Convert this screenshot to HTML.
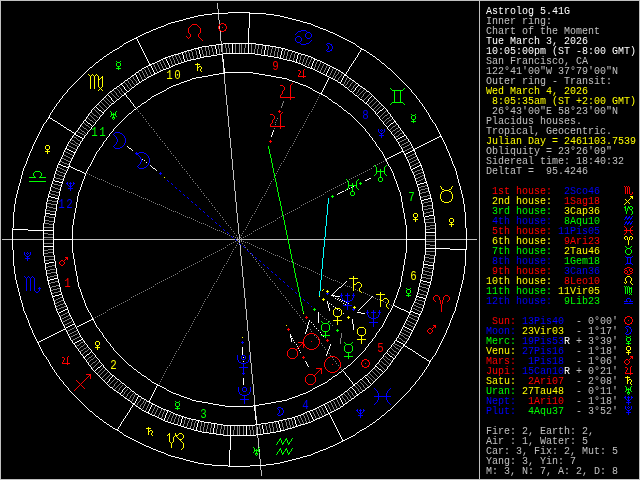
<!DOCTYPE html>
<html lang="en"><head><meta charset="utf-8"><title>Astrolog 5.41G - Chart of the Moment / Transit</title>
<style>
html,body{margin:0;padding:0;background:#000}
body{position:relative;width:640px;height:480px;overflow:hidden}
#chart{position:absolute;left:0;top:0;display:block;will-change:transform}
#chart path{fill:none;stroke-width:1}
#house-numbers text{font-family:"Liberation Mono",monospace;font-size:13.5px;text-anchor:middle;stroke:none;letter-spacing:1.9px}
#sidebar{position:absolute;left:485.5px;top:7px;margin:0;white-space:pre;
 font-family:"Liberation Mono",monospace;font-size:10px;line-height:10px;color:#c0c0c0;will-change:transform;}
.w{color:#fff}.y{color:#ff0}.r{color:#f00}.g{color:#0f0}.b{color:#00f}
</style></head><body>
<svg id="chart" width="640" height="480" viewBox="0 0 640 480" shape-rendering="crispEdges">
<g id="frame" fill="none" stroke="#c0c0c0" stroke-width="1">
<rect x=".5" y=".5" width="639" height="479"/>
<line x1="479.5" y1="0" x2="479.5" y2="480"/>
</g>
<g id="axes">
<path transform="translate(0 .5)" stroke="#c0c0c0" d="M2 239h475"/>
<path transform="translate(.5 0)" stroke="#c0c0c0" d="M217 3v6M218 9v11M219 20v10M220 30v11M221 41v11M222 52v10M223 62v11M224 73v11M225 84v11M226 95v10M227 105v11M228 116v11M229 127v11M230 138v10M231 148v11M232 159v11M233 170v10M234 180v11M235 191v11M236 202v11M237 213v10M238 223v11M239 234v5M239 240v5M240 245v11M241 256v10M242 266v11M243 277v11M244 288v10M245 298v11M246 309v11M247 320v11M248 331v10M249 341v11M250 352v11M251 363v11M252 374v10M253 384v11M254 395v11M255 406v10M256 416v11M257 427v11M258 438v11M259 449v10M260 459v11M261 470v6"/>
</g>
<g id="degree-ticks">
<path transform="translate(0 .5)" stroke="#ffffff" d="M165 58h1M150 65h1M330 66h1M135 74h1M344 75h1M139 81h1M340 82h1M121 84h1M122 85h1M358 85h1M123 86h1M357 86h1M356 87h1M125 89h1M126 90h1M354 90h1M353 91h1M108 95h1M109 96h1M371 96h1M110 97h1M370 97h1M369 98h1M112 100h1M113 101h1M367 101h1M366 102h1M96 107h1M97 108h1M383 108h1M98 109h1M382 109h1M99 110h2M380 110h2M101 111h1M379 111h1M102 112h1M378 112h1M377 113h1M85 120h1M86 121h1M394 121h1M87 122h1M393 122h1M88 123h2M391 123h2M90 124h1M390 124h1M91 125h1M389 125h1M388 126h1M75 134h1M76 135h2M404 135h1M78 136h2M402 136h2M80 137h2M400 137h2M82 138h1M398 138h2M397 139h1M66 148h1M67 149h2M69 150h2M412 150h2M71 151h2M410 151h2M73 152h2M408 152h2M406 153h2M405 154h1M59 164h2M61 165h2M419 165h2M63 166h3M417 166h2M66 167h2M415 167h2M413 168h2M412 169h1M53 180h2M55 181h4M59 182h3M424 182h2M420 183h4M418 184h2M49 196h2M51 197h4M55 198h3M428 198h3M424 199h4M422 200h2M46 213h4M50 214h5M429 215h5M425 216h4M44 230h9M426 232h9M44 246h9M426 248h9M49 262h5M45 263h4M424 264h4M428 265h5M54 278h3M50 279h4M48 280h2M421 280h2M423 281h4M427 282h3M59 294h2M55 295h4M53 296h2M417 296h2M419 297h4M423 298h3M65 309h2M63 310h2M61 311h2M411 311h2M59 312h2M413 312h2M58 313h1M415 313h3M418 314h2M72 324h2M70 325h2M68 326h2M404 326h1M66 327h2M405 327h2M65 328h1M407 328h2M409 329h2M411 330h2M81 339h1M79 340h2M396 340h1M77 341h2M397 341h2M75 342h2M399 342h2M74 343h1M401 343h2M403 344h1M90 352h1M89 353h1M387 353h1M87 354h2M388 354h1M86 355h1M389 355h1M85 356h1M390 356h2M84 357h1M392 357h1M393 358h1M101 365h1M100 366h1M376 366h1M98 367h2M377 367h1M97 368h1M378 368h1M96 369h1M379 369h2M95 370h1M381 370h1M382 371h1M112 376h1M111 377h1M365 377h1M110 378h1M366 378h1M367 379h1M108 381h1M107 382h1M369 382h1M370 383h1M125 387h1M124 388h1M352 388h1M123 389h1M353 389h1M354 390h1M121 392h1M120 393h1M356 393h1M357 394h1M138 396h1M339 397h1M134 403h1M152 404h1M343 404h1M324 405h1M309 412h1"/>
<path transform="translate(.5 0)" stroke="#ffffff" d="M109 379v2M111 98v2M122 390v2M124 87v2M135 401v2M136 75v2M136 399v2M137 77v2M137 397v2M138 79v2M148 411v2M149 409v2M150 407v2M151 66v2M151 405v2M152 68v2M153 70v2M154 72v2M164 418v2M165 415v3M166 59v2M166 413v2M167 61v2M167 411v2M168 63v2M169 65v2M180 423v3M181 419v4M182 53v2M182 417v2M183 55v4M184 59v2M196 427v3M197 423v4M198 48v2M198 421v2M199 50v4M200 54v3M213 428v5M214 424v4M215 45v4M216 49v5M230 426v9M232 44v9M246 426v9M248 44v9M262 425v4M263 429v5M264 50v5M265 46v4M278 422v2M279 424v4M280 55v3M280 428v3M281 51v4M282 49v2M294 418v2M295 420v4M296 59v3M296 424v2M297 55v4M298 53v2M310 413v2M311 66v2M311 415v2M312 63v3M312 417v2M313 61v2M313 419v2M314 59v2M325 406v2M326 73v2M326 408v2M327 71v2M327 410v2M328 69v2M328 412v2M329 67v2M340 398v2M341 80v2M341 400v2M342 78v2M342 402v2M343 76v2M355 88v2M355 391v2M368 99v2M368 380v2"/>
<path transform="translate(0 .5)" stroke="#808080" d="M162 60h1M159 61h1M156 62h1M324 63h1M153 64h1M327 65h1M147 67h1M166 67h1M333 68h1M144 69h1M141 70h1M336 70h1M157 71h1M339 71h1M138 72h1M323 72h1M342 73h1M151 74h1M337 74h1M329 75h1M336 75h1M132 76h1M148 76h1M340 76h1M145 77h1M332 77h1M339 77h1M347 77h1M129 78h1M334 78h1M130 79h1M134 79h1M142 79h1M350 79h1M127 80h1M131 80h1M135 80h1M337 80h1M349 80h1M348 81h1M353 81h1M124 82h1M352 82h1M125 83h1M129 83h1M133 83h1M137 83h1M351 83h1M356 83h1M126 84h1M134 84h1M343 84h1M346 84h1M355 84h1M345 85h1M354 85h1M118 86h1M131 86h1M349 86h1M119 87h1M128 87h1M348 87h1M361 87h1M116 88h1M120 88h1M129 88h1M352 88h1M360 88h1M117 89h1M351 89h1M359 89h1M364 89h1M113 90h1M118 90h1M363 90h1M114 91h1M122 91h1M362 91h1M366 91h1M110 92h1M115 92h1M123 92h1M357 92h1M361 92h1M365 92h1M111 93h1M120 93h1M356 93h1M360 93h1M364 93h1M112 94h1M121 94h1M359 94h1M369 94h1M113 95h1M117 95h1M358 95h1M368 95h1M114 96h1M118 96h1M362 96h1M367 96h1M105 97h1M115 97h1M361 97h1M366 97h1M106 98h1M116 98h1M365 98h1M374 98h1M103 99h1M107 99h1M364 99h1M373 99h1M104 100h1M108 100h1M363 100h1M372 100h1M105 101h1M109 101h1M371 101h1M376 101h1M101 102h1M106 102h1M110 102h1M370 102h1M375 102h1M102 103h1M107 103h1M111 103h1M369 103h1M374 103h1M379 103h1M98 104h1M103 104h1M108 104h1M368 104h1M373 104h1M378 104h1M99 105h1M104 105h1M109 105h1M372 105h1M377 105h1M381 105h1M100 106h1M105 106h1M371 106h1M376 106h1M380 106h1M101 107h1M106 107h1M375 107h1M379 107h1M102 108h1M374 108h1M378 108h1M94 109h1M103 109h1M373 109h1M377 109h1M95 110h1M104 110h1M376 110h1M386 110h1M96 111h1M375 111h1M385 111h1M91 112h1M97 112h1M384 112h1M92 113h1M98 113h1M383 113h1M388 113h1M89 114h1M93 114h1M99 114h1M382 114h1M387 114h1M90 115h1M94 115h2M100 115h1M381 115h1M385 115h2M91 116h1M96 116h1M380 116h1M384 116h1M390 116h1M87 117h1M92 117h1M97 117h1M383 117h1M389 117h1M88 118h1M93 118h1M382 118h1M387 118h2M392 118h1M89 119h1M94 119h1M386 119h1M391 119h1M90 120h2M95 120h1M385 120h1M389 120h2M92 121h1M384 121h1M388 121h1M83 122h1M93 122h1M387 122h1M84 123h1M386 123h1M85 124h1M396 124h1M81 125h1M86 125h2M395 125h1M82 126h1M88 126h1M393 126h2M83 127h1M89 127h1M392 127h1M398 127h1M79 128h1M84 128h2M391 128h1M396 128h2M80 129h1M86 129h1M390 129h1M395 129h1M400 129h1M81 130h1M87 130h1M393 130h2M399 130h1M77 131h1M82 131h2M392 131h1M397 131h2M78 132h2M84 132h1M396 132h1M402 132h1M80 133h2M85 133h1M395 133h1M400 133h2M82 134h2M394 134h1M399 134h1M84 135h1M398 135h1M73 136h1M396 136h2M74 137h2M395 137h1M76 138h1M406 138h1M71 139h1M77 139h1M404 139h2M72 140h2M78 140h2M402 140h2M74 141h1M80 141h1M400 141h2M408 141h1M70 142h1M75 142h1M399 142h1M406 142h2M71 143h2M76 143h2M404 143h2M73 144h2M78 144h1M402 144h2M409 144h1M68 145h1M75 145h2M401 145h1M407 145h2M69 146h2M77 146h1M405 146h2M71 147h2M403 147h2M411 147h1M73 148h2M402 148h1M409 148h2M75 149h1M407 149h2M405 150h2M65 151h1M404 151h1M66 152h2M68 153h2M414 153h1M63 154h1M70 154h2M412 154h2M64 155h2M72 155h1M410 155h2M66 156h2M408 156h2M415 156h2M68 157h2M407 157h1M413 157h2M62 158h2M70 158h2M411 158h2M64 159h2M409 159h2M416 159h2M66 160h2M408 160h1M414 160h2M60 161h2M68 161h2M412 161h2M62 162h2M410 162h2M418 162h1M64 163h3M409 163h1M416 163h2M67 164h2M414 164h2M412 165h2M411 166h1M58 167h2M60 168h2M62 169h2M420 169h2M56 170h2M64 170h2M417 170h3M58 171h2M415 171h2M60 172h3M413 172h2M421 172h2M55 173h2M63 173h2M418 173h3M57 174h2M416 174h2M59 175h3M414 175h2M422 175h2M62 176h2M420 176h2M54 177h2M418 177h2M56 178h4M416 178h2M423 178h2M60 179h3M421 179h2M419 180h2M417 181h2M52 183h2M54 184h4M58 185h3M425 185h2M51 186h2M421 186h4M53 187h2M419 187h2M55 188h3M425 188h3M58 189h2M421 189h4M50 190h2M419 190h2M52 191h4M426 191h3M56 192h3M422 192h4M49 193h2M420 193h2M51 194h4M55 195h3M427 195h3M423 196h4M421 197h2M48 200h4M52 201h5M428 201h3M424 202h4M47 203h4M422 203h2M51 204h5M427 205h5M47 206h2M423 206h4M49 207h4M53 208h3M428 208h5M424 209h4M46 210h4M50 211h5M430 211h3M426 212h4M424 213h2M45 216h4M49 217h5M429 218h5M425 219h4M45 220h4M49 221h5M425 222h9M44 223h5M49 224h5M430 225h5M426 226h4M44 227h9M430 228h5M426 229h4M44 233h4M48 234h5M426 235h9M44 237h9M44 239h9M426 239h9M426 241h9M44 243h9M426 244h4M430 245h5M48 249h5M44 250h4M426 251h9M48 252h5M44 253h4M425 254h5M430 255h5M45 256h9M425 257h4M429 258h5M49 259h5M45 260h4M425 261h4M429 262h5M52 265h3M48 266h4M46 267h2M424 267h4M428 268h5M50 269h5M46 270h4M423 270h2M425 271h4M51 272h5M429 272h3M47 273h4M423 274h4M54 275h3M427 275h5M50 276h4M48 277h2M422 277h4M426 278h5M55 281h3M51 282h4M49 283h2M421 283h2M423 284h4M56 285h3M427 285h3M52 286h4M420 286h2M50 287h2M422 287h4M57 288h3M426 288h3M53 289h4M419 289h2M51 290h2M421 290h2M58 291h2M423 291h3M54 292h4M426 292h2M52 293h2M418 293h2M420 294h4M424 295h3M60 297h2M58 298h2M56 299h2M416 299h2M54 300h2M61 300h2M418 300h4M59 301h2M422 301h3M57 302h2M415 302h2M55 303h2M63 303h2M417 303h2M60 304h3M419 304h3M58 305h2M414 305h2M422 305h2M56 306h2M64 306h2M416 306h2M61 307h3M418 307h3M59 308h2M413 308h2M421 308h2M57 309h2M415 309h2M417 310h2M419 311h2M67 312h1M65 313h2M63 314h2M410 314h2M61 315h2M68 315h2M412 315h2M60 316h1M66 316h2M414 316h3M64 317h2M409 317h2M417 317h2M62 318h2M69 318h2M411 318h2M61 319h1M67 319h2M413 319h2M65 320h2M407 320h1M415 320h2M63 321h2M71 321h1M408 321h2M62 322h1M69 322h2M410 322h2M67 323h2M406 323h1M412 323h2M65 324h2M407 324h2M414 324h2M64 325h1M409 325h2M411 326h2M74 327h1M413 327h1M72 328h2M70 329h2M403 329h1M68 330h2M76 330h1M404 330h2M67 331h1M74 331h2M406 331h2M72 332h2M401 332h1M408 332h2M70 333h2M77 333h1M402 333h2M410 333h1M69 334h1M75 334h2M400 334h1M404 334h2M73 335h2M401 335h2M406 335h2M71 336h2M79 336h1M403 336h1M408 336h1M70 337h1M77 337h2M398 337h1M404 337h1M75 338h2M399 338h2M405 338h2M73 339h2M401 339h1M407 339h1M72 340h1M402 340h1M83 341h1M403 341h2M81 342h2M405 342h1M80 343h1M394 343h1M79 344h1M84 344h1M395 344h2M77 345h2M83 345h1M393 345h1M397 345h2M76 346h1M81 346h2M394 346h1M399 346h2M80 347h1M86 347h1M395 347h1M401 347h1M79 348h1M84 348h2M391 348h1M396 348h2M78 349h1M83 349h1M88 349h1M392 349h1M398 349h1M81 350h2M87 350h1M393 350h1M399 350h1M80 351h1M85 351h2M389 351h1M394 351h2M84 352h1M390 352h1M396 352h1M83 353h1M391 353h1M397 353h1M82 354h1M392 354h2M92 355h1M394 355h1M91 356h1M385 356h1M395 356h1M89 357h2M94 357h1M386 357h1M88 358h1M93 358h1M383 358h1M387 358h1M87 359h1M91 359h2M384 359h1M388 359h2M86 360h1M90 360h1M96 360h1M385 360h1M390 360h1M89 361h1M95 361h1M381 361h1M386 361h1M391 361h1M88 362h1M93 362h2M98 362h1M382 362h1M387 362h1M92 363h1M97 363h1M378 363h1M383 363h1M388 363h1M91 364h1M96 364h1M379 364h1M384 364h2M389 364h1M90 365h1M95 365h1M380 365h1M386 365h1M94 366h1M381 366h1M387 366h1M93 367h1M103 367h1M382 367h1M92 368h1M102 368h1M374 368h1M383 368h1M101 369h1M105 369h1M375 369h1M384 369h1M100 370h1M104 370h1M376 370h1M99 371h1M103 371h1M372 371h1M377 371h1M98 372h1M102 372h1M107 372h1M373 372h1M378 372h1M97 373h1M101 373h1M106 373h1M369 373h1M374 373h1M379 373h1M100 374h1M105 374h1M110 374h1M370 374h1M375 374h1M380 374h1M99 375h1M104 375h1M109 375h1M367 375h1M371 375h1M376 375h1M103 376h1M108 376h1M368 376h1M372 376h1M377 376h1M102 377h1M107 377h1M369 377h1M373 377h1M106 378h1M115 378h1M370 378h1M374 378h1M105 379h1M114 379h1M371 379h1M375 379h1M104 380h1M113 380h1M362 380h1M372 380h1M112 381h1M117 381h1M363 381h1M373 381h1M111 382h1M116 382h1M360 382h1M364 382h1M110 383h1M115 383h1M120 383h1M361 383h1M365 383h1M109 384h1M119 384h1M357 384h1M362 384h1M366 384h1M118 385h1M122 385h1M358 385h1M367 385h1M113 386h1M117 386h1M121 386h1M355 386h1M359 386h1M368 386h1M112 387h1M116 387h1M120 387h1M356 387h1M364 387h1M115 388h1M357 388h1M365 388h1M114 389h1M127 389h1M361 389h1M118 390h1M126 390h1M349 390h1M362 390h1M117 391h1M125 391h1M130 391h1M350 391h1M359 391h1M129 392h1M347 392h1M351 392h1M360 392h1M128 393h1M133 393h1M123 394h1M132 394h1M135 394h1M344 394h1M122 395h1M131 395h1M341 395h1M345 395h1M349 395h1M353 395h1M126 396h1M346 396h1M354 396h1M125 397h1M129 398h1M141 398h1M343 398h1M351 398h1M128 399h1M336 399h1M344 399h1M348 399h1M144 400h1M349 400h1M131 401h1M139 401h1M146 401h1M333 401h1M138 402h1M330 402h1M346 402h1M142 403h1M149 403h1M141 404h1M327 404h1M136 405h1M155 406h1M340 406h1M139 407h1M158 407h1M321 407h1M142 408h1M318 408h1M337 408h1M315 409h1M334 409h1M145 410h1M312 411h1M331 411h1M151 413h1M325 414h1M316 418h1"/>
<path transform="translate(.5 0)" stroke="#808080" d="M114 384v2M116 93v2M119 91v2M119 388v2M121 89v2M124 392v2M127 85v2M127 394v2M128 81v2M130 84v2M130 396v2M132 81v2M132 399v2M133 77v2M133 397v2M134 395v2M136 81v2M137 403v2M139 73v2M140 75v2M140 399v2M140 405v2M141 77v2M142 71v2M143 73v2M143 401v2M143 406v2M144 75v2M144 404v2M145 70v2M145 402v2M146 72v2M146 408v2M147 74v2M147 406v2M148 68v2M148 404v2M149 70v2M150 72v2M152 411v2M153 409v2M154 65v2M154 407v2M154 414v2M155 67v2M155 412v2M156 69v2M156 410v2M157 63v2M157 408v2M158 65v2M158 415v2M159 67v2M159 413v2M160 62v2M160 69v2M160 411v2M161 64v2M161 409v2M161 417v2M162 66v2M162 414v3M163 61v2M163 68v2M163 412v2M164 63v2M164 410v2M165 65v2M167 419v2M168 417v2M169 57v2M169 415v2M170 59v2M170 413v2M170 421v2M171 61v3M171 418v3M172 56v2M172 64v2M172 416v2M173 58v2M173 414v2M173 422v2M174 60v3M174 419v3M175 55v2M175 63v2M175 417v2M176 57v2M176 415v2M177 59v2M177 422v3M178 54v2M178 61v2M178 418v4M179 56v2M179 416v2M180 58v2M181 60v2M183 424v3M184 420v4M185 52v2M185 418v2M186 54v4M186 426v2M187 58v2M187 423v3M188 51v2M188 421v2M189 53v4M189 419v2M190 57v3M190 426v3M191 50v2M191 422v4M192 52v4M192 420v2M193 56v3M193 427v3M194 423v4M195 49v2M195 421v2M196 51v4M197 55v3M200 426v5M201 48v2M201 422v4M202 50v4M203 54v3M203 427v5M204 423v4M205 47v4M206 51v5M206 429v3M207 425v4M208 46v4M208 423v2M209 50v5M210 428v5M211 46v2M211 424v4M212 48v4M213 52v3M216 429v5M217 425v4M218 45v4M219 49v5M220 429v5M221 425v4M222 45v9M223 430v5M224 425v5M225 44v4M226 48v5M227 426v9M228 44v4M229 48v5M233 430v5M234 426v4M235 44v9M237 426v9M239 44v9M239 426v9M241 44v9M243 426v9M244 48v5M245 44v4M249 426v4M250 430v5M251 44v9M252 426v4M253 430v5M254 49v5M255 44v5M256 425v9M257 49v5M258 45v4M259 425v4M260 429v5M261 49v5M262 45v4M265 424v2M266 426v4M267 50v5M267 430v3M268 46v4M269 424v4M270 53v3M270 428v5M271 49v4M272 47v2M272 423v4M273 427v5M274 51v5M275 47v4M275 422v2M276 424v4M277 52v5M277 428v3M278 48v4M281 421v2M282 423v4M283 55v3M283 427v3M284 51v4M285 49v2M285 420v2M286 56v3M286 422v4M287 52v4M287 426v3M288 50v2M288 419v2M289 58v2M289 421v4M290 55v3M290 425v3M291 53v2M291 419v2M292 51v2M292 421v4M293 58v3M293 425v2M294 54v4M295 52v2M297 417v2M298 419v2M299 60v3M299 421v2M300 56v4M300 416v2M300 423v2M301 54v2M301 418v2M302 62v2M302 420v2M303 59v3M303 414v2M303 422v2M304 57v2M304 416v2M305 55v2M305 63v2M305 418v3M306 60v3M306 413v2M306 421v2M307 58v2M307 415v2M308 56v2M308 64v2M308 417v3M309 62v2M309 420v2M310 60v2M311 58v2M313 412v2M314 67v2M314 414v2M315 64v3M315 416v2M316 62v2M316 410v2M317 60v2M317 68v2M317 412v2M318 66v2M318 414v2M319 64v2M319 409v2M319 416v2M320 62v2M320 70v2M320 411v2M321 68v2M321 413v2M322 66v2M322 408v2M322 415v2M323 64v2M323 410v2M324 70v2M324 412v2M325 68v2M326 66v2M328 405v2M329 407v2M330 73v2M330 409v2M331 71v2M331 403v2M332 69v2M332 405v2M333 75v2M333 407v2M334 73v2M334 402v2M335 71v2M335 76v2M335 404v2M336 406v2M337 400v2M338 72v2M338 78v2M338 402v2M339 404v2M341 74v2M342 396v2M344 82v2M345 80v2M345 400v2M346 78v2M347 82v2M347 397v2M348 393v2M350 84v2M350 396v2M352 393v2M353 86v2M358 90v2M358 389v2M360 387v2M363 94v2M363 385v2"/>
</g>
<g id="rings">
<path transform="translate(0 .5)" stroke="#ffffff" d="M228 12h22M212 13h16M250 13h16M204 14h8M266 14h8M198 15h6M274 15h6M194 16h4M280 16h4M190 17h4M284 17h4M186 18h4M288 18h4M183 19h3M292 19h4M179 20h4M296 20h4M175 21h4M300 21h3M171 22h4M303 22h4M168 23h3M307 23h4M166 24h2M311 24h2M164 25h2M313 25h2M161 26h3M315 26h3M158 27h3M318 27h2M156 28h2M320 28h3M153 29h3M323 29h3M151 30h2M326 30h2M149 31h2M328 31h2M146 32h3M330 32h3M144 33h2M333 33h2M142 34h2M335 34h2M140 35h2M337 35h2M138 36h2M339 36h2M136 37h2M341 37h2M134 38h2M343 38h2M132 39h2M345 39h2M130 40h2M347 40h2M128 41h2M349 41h2M126 42h2M351 42h2M124 43h2M223 43h33M353 43h2M123 44h1M216 44h7M256 44h7M355 44h1M122 45h1M209 45h7M263 45h7M356 45h1M120 46h2M202 46h7M270 46h6M357 46h2M119 47h1M198 47h4M276 47h5M359 47h1M117 48h2M194 48h4M281 48h4M360 48h2M115 49h2M191 49h3M285 49h3M362 49h2M113 50h2M187 50h4M288 50h4M364 50h2M112 51h1M184 51h3M292 51h3M366 51h1M110 52h2M181 52h3M295 52h3M367 52h2M109 53h1M178 53h3M223 53h32M298 53h3M369 53h1M107 54h2M174 54h4M217 54h6M255 54h6M301 54h4M370 54h2M106 55h1M171 55h3M211 55h6M261 55h7M305 55h3M372 55h1M104 56h2M168 56h3M204 56h7M268 56h6M308 56h3M373 56h2M103 57h1M165 57h3M200 57h4M274 57h5M311 57h2M375 57h1M102 58h1M163 58h2M196 58h4M279 58h4M313 58h2M376 58h1M100 59h2M161 59h2M191 59h5M283 59h4M315 59h2M377 59h2M99 60h1M159 60h2M187 60h4M287 60h5M317 60h3M379 60h1M98 61h1M157 61h2M184 61h3M292 61h3M320 61h2M380 61h1M96 62h2M155 62h2M181 62h3M295 62h3M322 62h2M381 62h1M95 63h1M152 63h3M178 63h3M298 63h3M324 63h2M382 63h2M94 64h1M150 64h2M175 64h3M301 64h2M326 64h2M384 64h1M93 65h1M148 65h2M173 65h2M303 65h2M328 65h2M385 65h1M92 66h1M146 66h2M171 66h2M305 66h2M330 66h2M386 66h1M90 67h2M144 67h2M169 67h2M307 67h3M332 67h2M387 67h1M89 68h1M142 68h2M166 68h3M310 68h3M334 68h2M388 68h2M88 69h1M141 69h1M163 69h3M313 69h2M336 69h2M390 69h1M87 70h1M139 70h2M161 70h2M315 70h2M338 70h2M391 70h1M86 71h1M138 71h1M159 71h2M317 71h2M340 71h1M392 71h1M85 72h1M136 72h2M157 72h2M225 72h28M319 72h2M341 72h2M393 72h1M84 73h1M135 73h1M155 73h2M219 73h6M253 73h6M321 73h2M343 73h1M394 73h1M83 74h1M134 74h1M153 74h2M213 74h6M259 74h6M323 74h2M344 74h1M395 74h1M82 75h1M132 75h2M151 75h2M208 75h5M265 75h6M325 75h2M345 75h2M396 75h1M81 76h1M131 76h1M149 76h2M202 76h6M271 76h5M327 76h2M347 76h1M397 76h1M80 77h1M130 77h1M147 77h2M196 77h6M276 77h6M329 77h2M348 77h1M398 77h1M79 78h1M128 78h2M146 78h1M192 78h4M282 78h5M331 78h2M349 78h2M399 78h1M78 79h1M127 79h1M144 79h2M190 79h2M287 79h2M333 79h2M351 79h1M400 79h1M77 80h1M125 80h2M142 80h2M187 80h3M289 80h3M335 80h2M352 80h2M401 80h1M76 81h1M124 81h1M141 81h1M184 81h3M292 81h3M337 81h1M354 81h1M402 81h1M75 82h1M123 82h1M139 82h2M181 82h3M295 82h3M338 82h2M355 82h1M403 82h1M74 83h1M121 83h2M138 83h1M179 83h2M298 83h2M340 83h1M356 83h2M404 83h1M73 84h1M120 84h1M136 84h2M176 84h3M300 84h3M341 84h2M358 84h1M405 84h1M72 85h1M119 85h1M135 85h1M173 85h3M303 85h3M343 85h1M359 85h1M406 85h1M71 86h1M117 86h2M134 86h1M171 86h2M306 86h2M344 86h1M360 86h2M407 86h1M70 87h1M116 87h1M132 87h2M169 87h2M308 87h2M345 87h2M362 87h1M408 87h1M69 88h1M114 88h2M131 88h1M167 88h2M310 88h2M347 88h1M363 88h2M409 88h1M68 89h1M113 89h1M130 89h1M166 89h1M312 89h1M348 89h1M365 89h1M410 89h1M112 90h1M129 90h1M164 90h2M313 90h2M349 90h1M366 90h1M110 91h2M127 91h2M162 91h2M315 91h2M350 91h2M367 91h2M66 92h1M109 92h1M126 92h1M160 92h2M317 92h2M352 92h1M369 92h1M412 92h1M65 93h1M108 93h1M125 93h1M158 93h2M319 93h2M353 93h1M370 93h1M413 93h1M64 94h1M107 94h1M124 94h1M156 94h2M321 94h2M354 94h1M371 94h1M414 94h1M63 95h1M106 95h1M122 95h2M154 95h2M323 95h2M355 95h2M372 95h1M415 95h1M105 96h1M121 96h1M152 96h2M325 96h2M357 96h1M373 96h1M104 97h1M120 97h1M151 97h1M327 97h1M358 97h1M374 97h1M61 98h1M103 98h1M119 98h1M150 98h1M328 98h1M359 98h1M375 98h1M417 98h1M60 99h1M102 99h1M117 99h2M148 99h2M329 99h2M360 99h2M376 99h1M418 99h1M101 100h1M116 100h1M147 100h1M331 100h1M362 100h1M377 100h1M100 101h1M115 101h1M146 101h1M332 101h1M363 101h1M378 101h1M58 102h1M99 102h1M114 102h1M144 102h2M333 102h2M364 102h1M379 102h1M420 102h1M57 103h1M98 103h1M112 103h2M142 103h2M335 103h2M365 103h2M380 103h1M421 103h1M97 104h1M111 104h1M141 104h1M337 104h1M367 104h1M381 104h1M96 105h1M110 105h1M140 105h1M338 105h1M368 105h1M382 105h1M55 106h1M95 106h1M109 106h1M138 106h2M339 106h2M369 106h1M383 106h1M423 106h1M94 107h1M108 107h1M137 107h1M341 107h1M370 107h1M384 107h1M93 108h1M107 108h1M136 108h1M342 108h1M371 108h1M385 108h1M53 109h1M92 109h1M106 109h1M134 109h2M343 109h1M372 109h1M386 109h1M425 109h1M105 110h1M133 110h1M344 110h2M373 110h1M104 111h1M132 111h1M346 111h1M374 111h1M51 112h1M90 112h1M131 112h1M347 112h1M388 112h1M427 112h1M89 113h1M129 113h2M348 113h2M389 113h1M102 114h1M128 114h1M350 114h1M376 114h1M101 115h1M127 115h1M351 115h1M377 115h1M87 116h1M100 116h1M126 116h1M352 116h1M378 116h1M391 116h1M125 117h1M353 117h1M124 118h1M354 118h1M47 119h1M85 119h1M98 119h1M123 119h1M355 119h1M380 119h1M393 119h1M431 119h1M84 120h1M97 120h1M122 120h1M356 120h1M381 120h1M394 120h1M96 121h1M121 121h1M357 121h1M382 121h1M45 122h1M120 122h1M358 122h1M433 122h1M44 123h1M82 123h1M119 123h1M359 123h1M396 123h1M434 123h1M81 124h1M94 124h1M118 124h1M360 124h1M384 124h1M397 124h1M93 125h1M117 125h1M361 125h1M385 125h1M92 126h1M116 126h1M362 126h1M386 126h1M79 127h1M115 127h1M363 127h1M399 127h1M114 128h1M364 128h1M90 129h1M388 129h1M77 130h1M89 130h1M389 130h1M401 130h1M76 131h1M88 131h1M112 131h1M366 131h1M390 131h1M402 131h1M111 132h1M367 132h1M110 133h1M368 133h1M74 134h1M86 134h1M392 134h1M404 134h1M73 135h1M85 135h1M393 135h1M405 135h1M108 136h1M370 136h1M107 137h1M371 137h1M71 138h1M83 138h1M395 138h1M407 138h1M105 140h1M373 140h1M69 141h1M81 141h1M104 141h1M374 141h1M397 141h1M409 141h1M78 146h1M101 146h1M377 146h1M400 146h1M100 147h1M378 147h1M98 150h1M380 150h1M97 151h1M381 151h1M89 166h1M389 166h1M89 312h1M389 312h1M97 327h1M381 327h1M98 328h1M380 328h1M100 331h1M378 331h1M101 332h1M377 332h1M81 337h1M104 337h1M374 337h1M397 337h1M105 338h1M373 338h1M71 340h1M83 340h1M395 340h1M407 340h1M107 341h1M371 341h1M108 342h1M370 342h1M73 343h1M85 343h1M109 343h1M369 343h1M393 343h1M405 343h1M74 344h1M86 344h1M392 344h1M404 344h1M111 346h1M367 346h1M76 347h1M88 347h1M112 347h1M366 347h1M390 347h1M402 347h1M77 348h1M89 348h1M389 348h1M401 348h1M90 349h1M388 349h1M114 350h1M364 350h1M79 351h1M115 351h1M363 351h1M399 351h1M92 352h1M116 352h1M362 352h1M386 352h1M93 353h1M117 353h1M361 353h1M385 353h1M81 354h1M94 354h1M118 354h1M360 354h1M384 354h1M397 354h1M44 355h1M82 355h1M119 355h1M359 355h1M396 355h1M434 355h1M45 356h1M120 356h1M358 356h1M433 356h1M96 357h1M121 357h1M357 357h1M382 357h1M84 358h1M97 358h1M122 358h1M356 358h1M381 358h1M394 358h1M47 359h1M85 359h1M98 359h1M123 359h1M355 359h1M380 359h1M393 359h1M431 359h1M124 360h1M354 360h1M125 361h1M353 361h1M87 362h1M100 362h1M126 362h1M352 362h1M378 362h1M391 362h1M101 363h1M127 363h1M351 363h1M377 363h1M102 364h1M128 364h1M350 364h1M376 364h1M89 365h1M129 365h2M348 365h2M389 365h1M51 366h1M90 366h1M131 366h1M347 366h1M388 366h1M427 366h1M104 367h1M132 367h1M346 367h1M374 367h1M105 368h1M133 368h1M344 368h2M373 368h1M53 369h1M92 369h1M106 369h1M134 369h2M343 369h1M372 369h1M386 369h1M425 369h1M93 370h1M107 370h1M136 370h1M342 370h1M371 370h1M385 370h1M94 371h1M108 371h1M137 371h1M341 371h1M370 371h1M384 371h1M55 372h1M95 372h1M109 372h1M138 372h2M339 372h2M369 372h1M383 372h1M423 372h1M96 373h1M110 373h1M140 373h1M338 373h1M368 373h1M382 373h1M97 374h1M111 374h1M141 374h1M337 374h1M367 374h1M381 374h1M57 375h1M98 375h1M112 375h2M142 375h2M335 375h2M365 375h2M380 375h1M421 375h1M58 376h1M99 376h1M114 376h1M144 376h2M333 376h2M364 376h1M379 376h1M420 376h1M100 377h1M115 377h1M146 377h1M332 377h1M363 377h1M378 377h1M101 378h1M116 378h1M147 378h1M331 378h1M362 378h1M377 378h1M60 379h1M102 379h1M117 379h2M148 379h2M329 379h2M360 379h2M376 379h1M418 379h1M61 380h1M103 380h1M119 380h1M150 380h1M328 380h1M359 380h1M375 380h1M417 380h1M62 381h1M104 381h1M120 381h1M151 381h1M327 381h1M358 381h1M374 381h1M416 381h1M105 382h1M121 382h1M152 382h2M325 382h2M357 382h1M373 382h1M106 383h1M122 383h2M154 383h2M323 383h2M355 383h2M372 383h1M64 384h1M107 384h1M124 384h1M156 384h2M321 384h2M354 384h1M371 384h1M414 384h1M65 385h1M108 385h1M125 385h1M158 385h2M319 385h2M353 385h1M370 385h1M413 385h1M66 386h1M109 386h1M126 386h1M160 386h2M317 386h2M352 386h1M369 386h1M412 386h1M67 387h1M110 387h2M127 387h2M162 387h2M315 387h2M350 387h2M367 387h2M411 387h1M112 388h1M129 388h1M164 388h2M313 388h2M349 388h1M366 388h1M113 389h1M130 389h1M166 389h1M312 389h1M348 389h1M365 389h1M69 390h1M114 390h2M131 390h1M167 390h2M310 390h2M347 390h1M363 390h2M409 390h1M70 391h1M116 391h1M132 391h2M169 391h2M308 391h2M345 391h2M362 391h1M408 391h1M71 392h1M117 392h2M134 392h1M171 392h2M306 392h2M344 392h1M360 392h2M407 392h1M72 393h1M119 393h1M135 393h1M173 393h3M303 393h3M343 393h1M359 393h1M406 393h1M73 394h1M120 394h1M136 394h2M176 394h3M300 394h3M341 394h2M358 394h1M405 394h1M74 395h1M121 395h2M138 395h1M179 395h2M298 395h2M340 395h1M356 395h2M404 395h1M75 396h1M123 396h1M139 396h2M181 396h3M295 396h3M338 396h2M355 396h1M403 396h1M76 397h1M124 397h1M141 397h1M184 397h3M292 397h3M337 397h1M354 397h1M402 397h1M77 398h1M125 398h2M142 398h2M187 398h3M289 398h3M335 398h2M352 398h2M401 398h1M78 399h1M127 399h1M144 399h2M190 399h2M287 399h2M333 399h2M351 399h1M400 399h1M79 400h1M128 400h2M146 400h1M192 400h4M282 400h5M331 400h2M349 400h2M399 400h1M80 401h1M130 401h1M147 401h2M196 401h6M276 401h6M329 401h2M348 401h1M398 401h1M81 402h1M131 402h1M149 402h2M202 402h6M271 402h5M327 402h2M347 402h1M397 402h1M82 403h1M132 403h2M151 403h2M208 403h5M265 403h6M325 403h2M345 403h2M396 403h1M83 404h1M134 404h1M153 404h2M213 404h6M259 404h6M323 404h2M344 404h1M395 404h1M84 405h1M135 405h1M155 405h2M219 405h6M253 405h6M321 405h2M343 405h1M394 405h1M85 406h1M136 406h2M157 406h2M225 406h28M319 406h2M341 406h2M393 406h1M86 407h1M138 407h1M159 407h2M317 407h2M340 407h1M392 407h1M87 408h1M139 408h2M161 408h2M315 408h2M338 408h2M391 408h1M88 409h1M141 409h1M163 409h3M313 409h2M336 409h2M390 409h1M89 410h1M142 410h2M166 410h3M310 410h3M334 410h2M388 410h2M90 411h2M144 411h2M169 411h2M307 411h3M332 411h2M387 411h1M92 412h1M146 412h2M171 412h2M305 412h2M330 412h2M386 412h1M93 413h1M148 413h2M173 413h2M303 413h2M328 413h2M385 413h1M94 414h1M150 414h2M175 414h3M301 414h2M326 414h2M384 414h1M95 415h1M152 415h3M178 415h3M298 415h3M324 415h2M382 415h2M96 416h2M155 416h2M181 416h3M295 416h3M322 416h2M381 416h1M98 417h1M157 417h2M184 417h3M292 417h3M320 417h2M380 417h1M99 418h1M159 418h2M187 418h4M287 418h5M317 418h3M379 418h1M100 419h2M161 419h2M191 419h5M283 419h4M315 419h2M377 419h2M102 420h1M163 420h2M196 420h4M279 420h4M313 420h2M376 420h1M103 421h1M165 421h3M200 421h4M274 421h5M311 421h2M375 421h1M104 422h2M168 422h3M204 422h7M268 422h6M308 422h3M373 422h2M106 423h1M171 423h3M211 423h6M261 423h7M305 423h3M372 423h1M107 424h2M174 424h4M217 424h6M255 424h6M301 424h4M370 424h2M109 425h1M178 425h3M223 425h32M298 425h3M369 425h1M110 426h2M181 426h3M295 426h3M367 426h2M112 427h1M184 427h3M292 427h3M366 427h1M113 428h2M187 428h4M288 428h4M364 428h2M115 429h2M191 429h3M285 429h3M362 429h2M117 430h2M194 430h4M281 430h4M360 430h2M119 431h1M198 431h4M276 431h5M359 431h1M120 432h2M202 432h7M270 432h6M357 432h2M122 433h1M209 433h7M263 433h7M356 433h1M123 434h1M216 434h7M256 434h7M355 434h1M124 435h2M223 435h33M353 435h2M126 436h2M351 436h2M128 437h2M349 437h2M130 438h2M347 438h2M132 439h2M345 439h2M134 440h2M343 440h2M136 441h2M341 441h2M138 442h2M339 442h2M140 443h2M337 443h2M142 444h2M335 444h2M144 445h2M333 445h2M146 446h3M330 446h3M149 447h2M328 447h2M151 448h2M326 448h2M153 449h3M323 449h3M156 450h2M320 450h3M158 451h3M318 451h2M161 452h3M315 452h3M164 453h2M313 453h2M166 454h2M311 454h2M168 455h3M307 455h4M171 456h4M303 456h4M175 457h4M300 457h3M179 458h4M296 458h4M183 459h3M292 459h4M186 460h4M288 460h4M190 461h4M284 461h4M194 462h4M280 462h4M198 463h6M274 463h6M204 464h8M266 464h8M212 465h16M250 465h16M228 466h22"/>
<path transform="translate(.5 0)" stroke="#ffffff" d="M12 228v22M13 212v16M13 250v16M14 204v8M14 266v8M15 198v6M15 274v6M16 194v4M16 280v4M17 190v4M17 284v4M18 186v4M18 288v4M19 183v3M19 292v4M20 179v4M20 296v4M21 175v4M21 300v3M22 171v4M22 303v4M23 168v3M23 307v4M24 166v2M24 311v2M25 164v2M25 313v2M26 161v3M26 315v3M27 158v3M27 318v2M28 156v2M28 320v3M29 153v3M29 323v3M30 151v2M30 326v2M31 149v2M31 328v2M32 146v3M32 330v3M33 144v2M33 333v2M34 142v2M34 335v2M35 140v2M35 337v2M36 138v2M36 339v2M37 136v2M37 341v2M38 134v2M38 343v2M39 132v2M39 345v2M40 130v2M40 347v2M41 128v2M41 349v2M42 126v2M42 351v2M43 124v2M43 223v33M43 353v2M44 216v7M44 256v7M45 209v7M45 263v7M46 120v2M46 202v7M46 270v6M46 357v2M47 198v4M47 276v5M48 117v2M48 194v4M48 281v4M48 360v2M49 115v2M49 191v3M49 285v3M49 362v2M50 113v2M50 187v4M50 288v4M50 364v2M51 184v3M51 292v3M52 110v2M52 181v3M52 295v3M52 367v2M53 178v3M53 223v32M53 298v3M54 107v2M54 174v4M54 217v6M54 255v6M54 301v4M54 370v2M55 171v3M55 211v6M55 261v7M55 305v3M56 104v2M56 168v3M56 204v7M56 268v6M56 308v3M56 373v2M57 165v3M57 200v4M57 274v5M57 311v2M58 163v2M58 196v4M58 279v4M58 313v2M59 100v2M59 161v2M59 191v5M59 283v4M59 315v2M59 377v2M60 159v2M60 187v4M60 287v5M60 317v3M61 157v2M61 184v3M61 292v3M61 320v2M62 96v2M62 155v2M62 181v3M62 295v3M62 322v2M63 152v3M63 178v3M63 298v3M63 324v2M63 382v2M64 150v2M64 175v3M64 301v2M64 326v2M65 148v2M65 173v2M65 303v2M65 328v2M66 146v2M66 171v2M66 305v2M66 330v2M67 90v2M67 144v2M67 169v2M67 307v3M67 332v2M68 142v2M68 166v3M68 310v3M68 334v2M68 388v2M69 163v3M69 313v2M69 336v2M70 139v2M70 161v2M70 315v2M70 338v2M71 159v2M71 317v2M72 136v2M72 157v2M72 225v28M72 319v2M72 341v2M73 155v2M73 219v6M73 253v6M73 321v2M74 153v2M74 213v6M74 259v6M74 323v2M75 132v2M75 151v2M75 208v5M75 265v6M75 325v2M75 345v2M76 149v2M76 202v6M76 271v5M76 327v2M77 147v2M77 196v6M77 276v6M77 329v2M78 128v2M78 192v4M78 282v5M78 331v2M78 349v2M79 144v2M79 190v2M79 287v2M79 333v2M80 125v2M80 142v2M80 187v3M80 289v3M80 335v2M80 352v2M81 184v3M81 292v3M82 139v2M82 181v3M82 295v3M82 338v2M83 121v2M83 179v2M83 298v2M83 356v2M84 136v2M84 176v3M84 300v3M84 341v2M85 173v3M85 303v3M86 117v2M86 171v2M86 306v2M86 360v2M87 132v2M87 169v2M87 308v2M87 345v2M88 114v2M88 167v2M88 310v2M88 363v2M90 164v2M90 313v2M91 110v2M91 127v2M91 162v2M91 315v2M91 350v2M91 367v2M92 160v2M92 317v2M93 158v2M93 319v2M94 156v2M94 321v2M95 122v2M95 154v2M95 323v2M95 355v2M96 152v2M96 325v2M99 117v2M99 148v2M99 329v2M99 360v2M102 144v2M102 333v2M103 112v2M103 142v2M103 335v2M103 365v2M106 138v2M106 339v2M109 134v2M110 344v2M113 129v2M113 348v2M365 129v2M365 348v2M368 344v2M369 134v2M372 138v2M372 339v2M375 112v2M375 142v2M375 335v2M375 365v2M376 144v2M376 333v2M379 117v2M379 148v2M379 329v2M379 360v2M382 152v2M382 325v2M383 122v2M383 154v2M383 323v2M383 355v2M384 156v2M384 321v2M385 158v2M385 319v2M386 160v2M386 317v2M387 110v2M387 127v2M387 162v2M387 315v2M387 350v2M387 367v2M388 164v2M388 313v2M390 114v2M390 167v2M390 310v2M390 363v2M391 132v2M391 169v2M391 308v2M391 345v2M392 117v2M392 171v2M392 306v2M392 360v2M393 173v3M393 303v3M394 136v2M394 176v3M394 300v3M394 341v2M395 121v2M395 179v2M395 298v2M395 356v2M396 139v2M396 181v3M396 295v3M396 338v2M397 184v3M397 292v3M398 125v2M398 142v2M398 187v3M398 289v3M398 335v2M398 352v2M399 144v2M399 190v2M399 287v2M399 333v2M400 128v2M400 192v4M400 282v5M400 331v2M400 349v2M401 147v2M401 196v6M401 276v6M401 329v2M402 149v2M402 202v6M402 271v5M402 327v2M403 132v2M403 151v2M403 208v5M403 265v6M403 325v2M403 345v2M404 153v2M404 213v6M404 259v6M404 323v2M405 155v2M405 219v6M405 253v6M405 321v2M406 136v2M406 157v2M406 225v28M406 319v2M406 341v2M407 159v2M407 317v2M408 139v2M408 161v2M408 315v2M408 338v2M409 163v3M409 313v2M409 336v2M410 142v2M410 166v3M410 310v3M410 334v2M410 388v2M411 90v2M411 144v2M411 169v2M411 307v3M411 332v2M412 146v2M412 171v2M412 305v2M412 330v2M413 148v2M413 173v2M413 303v2M413 328v2M414 150v2M414 175v3M414 301v2M414 326v2M415 152v3M415 178v3M415 298v3M415 324v2M415 382v2M416 96v2M416 155v2M416 181v3M416 295v3M416 322v2M417 157v2M417 184v3M417 292v3M417 320v2M418 159v2M418 187v4M418 287v5M418 317v3M419 100v2M419 161v2M419 191v5M419 283v4M419 315v2M419 377v2M420 163v2M420 196v4M420 279v4M420 313v2M421 165v3M421 200v4M421 274v5M421 311v2M422 104v2M422 168v3M422 204v7M422 268v6M422 308v3M422 373v2M423 171v3M423 211v6M423 261v7M423 305v3M424 107v2M424 174v4M424 217v6M424 255v6M424 301v4M424 370v2M425 178v3M425 223v32M425 298v3M426 110v2M426 181v3M426 295v3M426 367v2M427 184v3M427 292v3M428 113v2M428 187v4M428 288v4M428 364v2M429 115v2M429 191v3M429 285v3M429 362v2M430 117v2M430 194v4M430 281v4M430 360v2M431 198v4M431 276v5M432 120v2M432 202v7M432 270v6M432 357v2M433 209v7M433 263v7M434 216v7M434 256v7M435 124v2M435 223v33M435 353v2M436 126v2M436 351v2M437 128v2M437 349v2M438 130v2M438 347v2M439 132v2M439 345v2M440 134v2M440 343v2M441 136v2M441 341v2M442 138v2M442 339v2M443 140v2M443 337v2M444 142v2M444 335v2M445 144v2M445 333v2M446 146v3M446 330v3M447 149v2M447 328v2M448 151v2M448 326v2M449 153v3M449 323v3M450 156v2M450 320v3M451 158v3M451 318v2M452 161v3M452 315v3M453 164v2M453 313v2M454 166v2M454 311v2M455 168v3M455 307v4M456 171v4M456 303v4M457 175v4M457 300v3M458 179v4M458 296v4M459 183v3M459 292v4M460 186v4M460 288v4M461 190v4M461 284v4M462 194v4M462 280v4M463 198v6M463 274v6M464 204v8M464 266v8M465 212v16M465 250v16M466 228v22"/>
</g>
<g id="sign-house-lines">
<path transform="translate(0 .5)" stroke="#ffffff" d="M136 38h1M361 49h1M359 52h1M356 57h1M354 60h1M352 63h1M350 66h1M347 71h1M345 74h1M329 77h1M124 93h1M125 94h1M127 97h1M128 98h1M129 99h1M131 102h1M132 103h1M134 106h1M135 107h1M49 117h1M50 118h2M52 119h1M53 120h2M55 121h2M57 122h1M58 123h2M60 124h1M61 125h2M63 126h1M64 127h2M66 128h1M67 129h2M69 130h2M71 131h1M72 132h2M74 133h1M439 136h2M437 137h2M435 138h2M433 139h2M431 140h2M429 141h2M427 142h2M425 143h2M423 144h2M421 145h2M419 146h2M417 147h2M415 148h2M414 149h1M401 151h2M399 152h2M397 153h2M395 154h2M393 155h2M391 156h2M389 157h2M387 158h2M386 159h1M69 166h2M71 167h2M73 168h2M75 169h2M77 170h3M80 171h2M82 172h2M84 173h2M13 229h15M28 230h16M53 239h19M407 239h19M435 248h15M450 249h16M393 305h2M395 306h2M397 307h2M399 308h2M401 309h3M404 310h2M406 311h2M408 312h2M91 319h2M89 320h2M87 321h2M85 322h2M83 323h2M81 324h2M79 325h2M77 326h2M76 327h1M63 329h2M61 330h2M59 331h2M57 332h2M55 333h2M53 334h2M51 335h2M49 336h2M47 337h2M45 338h2M43 339h2M41 340h2M39 341h2M38 342h1M404 345h1M405 346h2M407 347h1M408 348h2M410 349h2M412 350h1M413 351h2M415 352h1M416 353h2M418 354h1M419 355h2M421 356h1M422 357h2M424 358h2M426 359h1M427 360h2M429 361h1M343 371h1M344 372h1M346 375h1M347 376h1M348 377h1M350 380h1M351 381h1M353 384h1M157 385h1M354 385h1M133 404h1M131 407h1M128 412h1M329 414h1M126 415h1M124 418h1M122 421h1M119 426h1M117 429h1"/>
<path transform="translate(.5 0)" stroke="#ffffff" d="M118 427v2M120 424v2M121 422v2M123 419v2M125 416v2M126 95v2M127 413v2M129 410v2M130 100v2M130 408v2M132 405v2M133 104v2M137 39v2M138 41v2M139 43v2M140 45v2M141 47v2M142 49v2M143 51v2M144 53v2M145 55v2M146 57v2M147 59v2M148 61v2M149 63v2M149 400v2M150 398v2M151 396v2M152 394v2M153 392v2M154 390v2M155 388v2M156 386v2M222 54v5M223 59v9M224 68v5M229 450v16M230 435v15M248 28v16M249 13v15M254 406v5M255 411v9M256 420v5M321 92v2M322 90v2M323 88v2M324 86v2M325 84v2M326 82v2M327 80v2M328 78v2M330 415v2M331 417v2M332 419v2M333 421v2M334 423v2M335 425v2M336 427v2M337 429v2M338 431v2M339 433v2M340 435v2M341 437v2M342 439v2M345 373v2M346 72v2M348 69v2M349 67v2M349 378v2M351 64v2M352 382v2M353 61v2M355 58v2M357 55v2M358 53v2M360 50v2"/>
</g>
<g id="house-spokes">
<path transform="translate(0 .5)" stroke="#808080" d="M319 95h1M318 97h1M317 99h1M316 101h1M315 103h1M314 105h1M313 107h1M137 109h1M312 109h1M138 111h1M311 111h1M140 113h1M309 113h1M142 115h1M308 115h1M143 117h1M307 117h1M145 119h1M306 119h1M146 121h1M305 121h1M148 123h1M304 123h1M149 125h1M303 125h1M151 127h1M302 127h1M153 129h1M300 129h1M154 131h1M299 131h1M156 133h1M298 133h1M157 135h1M297 135h1M159 137h1M296 137h1M160 139h1M295 139h1M162 141h1M294 141h1M164 143h1M293 143h1M165 145h1M292 145h1M167 147h1M290 147h1M168 149h1M289 149h1M170 151h1M288 151h1M171 153h1M287 153h1M173 155h1M286 155h1M175 157h1M285 157h1M176 159h1M284 159h1M385 160h1M178 161h1M283 161h1M383 161h1M381 162h1M179 163h1M281 163h1M379 163h1M377 164h1M181 165h1M280 165h1M375 165h1M373 166h1M182 167h1M279 167h1M371 168h1M184 169h1M278 169h1M369 169h1M367 170h1M186 171h1M277 171h1M365 171h1M363 172h1M87 173h1M187 173h1M276 173h1M361 173h1M89 174h1M359 174h1M91 175h1M189 175h1M275 175h1M357 175h1M93 176h1M355 176h1M95 177h1M190 177h1M274 177h1M353 177h1M97 178h1M351 178h1M99 179h1M101 179h1M192 179h1M273 179h1M349 179h1M103 180h1M105 181h1M193 181h1M271 181h1M347 181h1M107 182h1M345 182h1M109 183h1M195 183h1M270 183h1M343 183h1M111 184h1M341 184h1M113 185h1M197 185h1M269 185h1M339 185h1M115 186h1M117 186h1M337 186h1M119 187h1M198 187h1M268 187h1M335 187h1M121 188h1M333 188h1M123 189h1M200 189h1M267 189h1M331 189h1M125 190h1M329 190h1M127 191h1M201 191h1M266 191h1M327 191h1M129 192h1M131 192h1M325 192h1M133 193h1M203 193h1M265 193h1M135 194h1M323 194h1M137 195h1M204 195h1M264 195h1M321 195h1M139 196h1M319 196h1M141 197h1M206 197h1M262 197h1M317 197h1M143 198h1M145 198h1M315 198h1M147 199h1M208 199h1M261 199h1M313 199h1M149 200h1M311 200h1M151 201h1M209 201h1M260 201h1M309 201h1M153 202h1M307 202h1M155 203h1M211 203h1M259 203h1M305 203h1M157 204h1M159 204h1M303 204h1M161 205h1M212 205h1M258 205h1M301 205h1M163 206h1M165 207h1M214 207h1M257 207h1M299 207h1M167 208h1M297 208h1M169 209h1M215 209h1M256 209h1M295 209h1M171 210h1M293 210h1M173 211h1M175 211h1M217 211h1M255 211h1M291 211h1M177 212h1M289 212h1M179 213h1M219 213h1M254 213h1M287 213h1M181 214h1M285 214h1M183 215h1M220 215h1M252 215h1M283 215h1M185 216h1M281 216h1M187 217h1M189 217h1M222 217h1M251 217h1M279 217h1M191 218h1M277 218h1M193 219h1M223 219h1M250 219h1M195 220h1M275 220h1M197 221h1M225 221h1M249 221h1M273 221h1M199 222h1M271 222h1M201 223h1M203 223h1M226 223h1M248 223h1M269 223h1M205 224h1M267 224h1M207 225h1M228 225h1M247 225h1M265 225h1M209 226h1M263 226h1M211 227h1M230 227h1M246 227h1M261 227h1M213 228h1M259 228h1M215 229h1M231 229h1M245 229h1M257 229h1M217 230h1M219 230h1M255 230h1M221 231h1M233 231h1M243 231h1M253 231h1M223 232h1M225 233h1M234 233h1M242 233h1M251 233h1M227 234h1M249 234h1M229 235h1M236 235h1M241 235h1M247 235h1M231 236h1M233 236h1M245 236h1M235 237h1M240 237h1M243 237h1M241 238h1M239 239h1M237 240h1M235 241h1M238 241h1M243 241h1M233 242h1M245 242h1M247 242h1M231 243h1M237 243h1M242 243h1M249 243h1M229 244h1M251 244h1M227 245h1M236 245h1M244 245h1M253 245h1M255 246h1M225 247h1M235 247h1M245 247h1M257 247h1M223 248h1M259 248h1M261 248h1M221 249h1M233 249h1M247 249h1M263 249h1M219 250h1M265 250h1M217 251h1M232 251h1M248 251h1M267 251h1M215 252h1M269 252h1M213 253h1M231 253h1M250 253h1M271 253h1M211 254h1M273 254h1M209 255h1M230 255h1M252 255h1M275 255h1M277 255h1M207 256h1M279 256h1M205 257h1M229 257h1M253 257h1M281 257h1M203 258h1M283 258h1M228 259h1M255 259h1M285 259h1M201 260h1M287 260h1M199 261h1M227 261h1M256 261h1M289 261h1M291 261h1M197 262h1M293 262h1M195 263h1M226 263h1M258 263h1M295 263h1M193 264h1M297 264h1M191 265h1M224 265h1M259 265h1M299 265h1M189 266h1M301 266h1M187 267h1M223 267h1M261 267h1M303 267h1M305 267h1M185 268h1M307 268h1M183 269h1M222 269h1M263 269h1M309 269h1M181 270h1M311 270h1M179 271h1M221 271h1M264 271h1M313 271h1M315 272h1M177 273h1M220 273h1M266 273h1M317 273h1M175 274h1M319 274h1M321 274h1M173 275h1M219 275h1M267 275h1M323 275h1M171 276h1M325 276h1M169 277h1M218 277h1M269 277h1M327 277h1M167 278h1M329 278h1M165 279h1M217 279h1M270 279h1M331 279h1M163 280h1M333 280h1M335 280h1M161 281h1M216 281h1M272 281h1M337 281h1M159 282h1M339 282h1M157 283h1M214 283h1M274 283h1M341 283h1M155 284h1M343 284h1M213 285h1M275 285h1M345 285h1M153 286h1M347 286h1M349 286h1M151 287h1M212 287h1M277 287h1M351 287h1M149 288h1M353 288h1M147 289h1M211 289h1M278 289h1M355 289h1M145 290h1M357 290h1M143 291h1M210 291h1M280 291h1M359 291h1M141 292h1M361 292h1M363 292h1M139 293h1M209 293h1M281 293h1M365 293h1M137 294h1M367 294h1M135 295h1M208 295h1M283 295h1M369 295h1M133 296h1M371 296h1M131 297h1M207 297h1M285 297h1M373 297h1M375 298h1M129 299h1M205 299h1M286 299h1M377 299h1M379 299h1M127 300h1M381 300h1M125 301h1M204 301h1M288 301h1M383 301h1M123 302h1M385 302h1M121 303h1M203 303h1M289 303h1M387 303h1M119 304h1M389 304h1M117 305h1M202 305h1M291 305h1M391 305h1M115 306h1M113 307h1M201 307h1M292 307h1M111 308h1M109 309h1M200 309h1M294 309h1M107 310h1M199 311h1M296 311h1M105 312h1M103 313h1M198 313h1M297 313h1M101 314h1M99 315h1M197 315h1M299 315h1M97 316h1M95 317h1M195 317h1M300 317h1M93 318h1M194 319h1M302 319h1M193 321h1M303 321h1M192 323h1M305 323h1M191 325h1M307 325h1M190 327h1M308 327h1M189 329h1M310 329h1M188 331h1M311 331h1M186 333h1M313 333h1M185 335h1M314 335h1M184 337h1M316 337h1M183 339h1M318 339h1M182 341h1M319 341h1M181 343h1M321 343h1M180 345h1M322 345h1M179 347h1M324 347h1M178 349h1M325 349h1M176 351h1M327 351h1M175 353h1M329 353h1M174 355h1M330 355h1M173 357h1M332 357h1M172 359h1M333 359h1M171 361h1M335 361h1M170 363h1M336 363h1M169 365h1M338 365h1M167 367h1M340 367h1M166 369h1M341 369h1M165 371h1M164 373h1M163 375h1M162 377h1M161 379h1M160 381h1M159 383h1"/>
<path transform="translate(.5 0)" stroke="#808080" d="M237 237v2M241 240v2"/>
</g>
<g id="sign-glyphs">
<path transform="translate(0 .5)" stroke="#ff0000" d="M192 24h5M191 25h1M197 25h1M190 26h1M198 26h1M189 27h1M199 27h1M189 33h1M199 33h1M186 36h1M187 37h1M189 37h1M199 37h1M188 38h1M200 38h1M201 39h1M202 40h1M435 295h3M445 295h3M434 296h1M438 296h1M444 296h1M448 296h1M434 300h1M448 300h1M435 301h1M447 301h1M86 374h5M89 375h1M88 376h1M87 377h1M86 378h1M85 379h1M76 380h1M84 380h1M77 381h1M83 381h1M78 382h1M82 382h1M79 383h1M81 383h1M80 384h1M79 385h1M81 385h1M78 386h1M82 386h1M77 387h1M83 387h1M76 388h1M84 388h1M75 389h1M74 390h1"/>
<path transform="translate(.5 0)" stroke="#ff0000" d="M90 375v4M188 28v5M190 34v3M198 34v3M200 28v5M433 297v3M439 297v3M440 300v4M441 304v8M442 300v4M443 297v3M449 297v3"/>
<path transform="translate(0 .5)" stroke="#ffff00" d="M88 74h1M92 74h1M96 74h1M89 75h1M91 75h1M93 75h1M95 75h1M97 75h1M101 77h1M100 78h1M99 79h1M99 87h1M101 87h1M100 88h1M99 89h1M101 89h1M98 90h1M102 90h1M440 186h1M452 186h1M442 189h2M449 189h2M444 190h5M442 191h2M449 191h2M442 201h2M449 201h2M444 202h5M179 433h3M168 434h1M178 434h1M182 434h1M167 435h1M175 435h3M174 436h1M177 437h1M178 438h1M182 438h1M179 439h3M181 441h1M170 442h1M172 442h1M182 442h1M182 448h1M181 449h1"/>
<path transform="translate(.5 0)" stroke="#ffff00" d="M90 76v13M94 76v13M98 76v11M102 76v11M169 433v9M171 443v5M173 437v5M175 433v2M176 436v1M180 440v1M183 435v3M183 443v5M440 194v5M441 187v2M441 192v2M441 199v2M451 187v2M451 192v2M451 199v2M452 194v5"/>
<path transform="translate(0 .5)" stroke="#00ff00" d="M390 88h1M404 88h1M391 89h1M403 89h1M392 90h2M395 90h5M401 90h2M392 102h2M395 102h5M401 102h2M391 103h1M403 103h1M390 104h1M404 104h1M35 171h5M34 172h1M40 172h1M29 177h7M39 177h7M29 181h17M292 438h1M279 439h2M285 439h2M278 441h1M284 441h1M290 441h1M282 443h2M288 443h2M276 444h1M292 448h1M279 449h2M285 449h2M278 451h1M284 451h1M290 451h1M282 453h2M288 453h2M276 454h1"/>
<path transform="translate(.5 0)" stroke="#00ff00" d="M33 173v3M34 176v1M40 176v1M41 173v3M277 442v2M277 452v2M279 440v1M279 450v1M280 438v1M280 448v1M281 440v3M281 450v3M282 444v1M282 454v1M283 442v1M283 452v1M285 440v1M285 450v1M286 438v1M286 448v1M287 440v3M287 450v3M288 444v1M288 454v1M289 442v1M289 452v1M291 439v2M291 449v2M394 90v13M400 90v13"/>
<path transform="translate(0 .5)" stroke="#0000ff" d="M301 30h5M298 31h3M306 31h1M297 32h1M307 32h3M296 33h1M306 33h1M310 33h1M295 34h1M297 36h3M296 37h1M300 37h1M306 37h1M310 37h1M307 38h3M311 40h1M296 41h1M300 41h1M310 41h1M297 42h3M309 42h1M300 43h1M306 43h3M301 44h5M24 276h1M28 276h1M32 276h1M25 277h1M27 277h1M29 277h1M31 277h1M33 277h1M38 288h1M40 288h1M35 291h1M38 291h1M36 292h2M374 388h1M390 388h1M375 389h1M389 389h1M376 390h1M388 390h1M374 396h17M376 402h1M388 402h1M375 403h1M389 403h1M374 404h1M390 404h1"/>
<path transform="translate(.5 0)" stroke="#0000ff" d="M26 278v13M30 278v13M34 278v13M39 287v4M295 38v3M301 38v3M305 34v3M311 34v3M377 391v2M377 400v2M378 393v3M378 397v3M386 393v3M386 397v3M387 391v2M387 400v2"/>
</g>
<g id="sign-rulers">
<path transform="translate(0 .5)" stroke="#ff0000" d="M221 23h3M219 24h2M224 24h2M222 27h1M219 30h2M224 30h2M221 31h3M433 325h3M434 326h1M433 327h1M429 328h2M432 328h1M428 329h1M431 329h1M428 332h1M431 332h1M429 333h2M68 356h1M62 357h2M62 363h8"/>
<path transform="translate(.5 0)" stroke="#ff0000" d="M62 362v1M63 360v2M64 358v2M67 357v6M67 364v1M218 26v3M219 25v1M219 29v1M225 25v1M225 29v1M226 26v3M427 330v2M432 330v2M435 326v2"/>
<path transform="translate(0 .5)" stroke="#ffff00" d="M46 145h3M46 149h1M48 149h1M45 151h5M450 218h3M450 222h1M452 222h1M449 224h5M146 428h2M149 428h2M150 430h2M149 431h1M152 435h1"/>
<path transform="translate(.5 0)" stroke="#ffff00" d="M45 146v3M47 149v2M47 152v2M49 146v3M148 427v8M151 433v2M152 431v2M449 219v3M451 222v2M451 225v2M453 219v3"/>
<path transform="translate(0 .5)" stroke="#00ff00" d="M116 61h1M120 61h1M117 62h3M117 66h1M119 66h1M116 68h5M411 114h1M415 114h1M412 115h3M412 119h1M414 119h1M411 121h5M253 447h1M259 447h1M254 450h5M253 452h1M259 452h1M255 453h1M257 453h1M256 455h1"/>
<path transform="translate(.5 0)" stroke="#00ff00" d="M116 63v3M118 66v2M118 69v1M120 63v3M254 448v2M254 451v1M255 454v1M256 449v1M256 451v3M257 454v1M258 448v2M258 451v1M411 116v3M413 119v2M413 122v1M415 116v3"/>
<path transform="translate(0 .5)" stroke="#0000ff" d="M327 43h3M326 44h1M330 44h2M327 45h1M327 49h1M326 50h1M330 50h2M327 51h3M27 252h1M26 253h1M28 253h1M27 254h1M25 255h1M29 255h1M26 256h1M28 256h1M25 258h5M356 410h1M359 410h1M361 410h1M364 410h1M358 412h1M362 412h1M359 413h1M361 413h1M358 415h2M361 415h2"/>
<path transform="translate(.5 0)" stroke="#0000ff" d="M24 252v3M27 256v2M27 259v2M30 252v3M328 46v3M331 45v1M331 49v1M332 46v3M357 409v3M360 409v9M363 409v3"/>
</g>
<g id="house-rulers">
<path transform="translate(0 .5)" stroke="#ff0000" d="M304 69h1M298 70h2M298 76h8M65 257h3M66 258h1M65 259h1M61 260h2M64 260h1M60 261h1M63 261h1M60 264h1M63 264h1M61 265h2M364 359h3M362 360h2M367 360h2M365 363h1M362 366h2M367 366h2M364 367h3"/>
<path transform="translate(.5 0)" stroke="#ff0000" d="M59 262v2M64 262v2M67 258v2M298 75v1M299 73v2M300 71v2M303 70v6M303 77v1M361 362v3M362 361v1M362 365v1M368 361v1M368 365v1M369 362v3"/>
<path transform="translate(0 .5)" stroke="#ffff00" d="M195 64h2M198 64h2M199 66h2M198 67h1M201 71h1M414 213h3M414 217h1M416 217h1M413 219h5M96 341h3M96 345h1M98 345h1M95 347h5"/>
<path transform="translate(.5 0)" stroke="#ffff00" d="M95 342v3M97 345v2M97 348v2M99 342v3M197 63v8M200 69v2M201 67v2M413 214v3M415 217v2M415 220v2M417 214v3"/>
<path transform="translate(0 .5)" stroke="#00ff00" d="M110 111h1M116 111h1M111 114h5M110 116h1M116 116h1M112 117h1M114 117h1M113 119h1M406 288h1M410 288h1M407 289h3M407 293h1M409 293h1M406 295h5M175 401h1M179 401h1M176 402h3M176 406h1M178 406h1M175 408h5"/>
<path transform="translate(.5 0)" stroke="#00ff00" d="M111 112v2M111 115v1M112 118v1M113 113v1M113 115v3M114 118v1M115 112v2M115 115v1M175 403v3M177 406v2M177 409v1M179 403v3M406 290v3M408 293v2M408 296v1M410 290v3"/>
<path transform="translate(0 .5)" stroke="#0000ff" d="M381 129h1M380 130h1M382 130h1M381 131h1M379 132h1M383 132h1M380 133h1M382 133h1M379 135h5M66 183h1M69 183h1M71 183h1M74 183h1M68 185h1M72 185h1M69 186h1M71 186h1M68 188h2M71 188h2M278 407h3M277 408h1M281 408h2M278 409h1M278 413h1M277 414h1M281 414h2M278 415h3"/>
<path transform="translate(.5 0)" stroke="#0000ff" d="M67 182v3M70 182v9M73 182v3M279 410v3M282 409v1M282 413v1M283 410v3M378 129v3M381 133v2M381 136v2M384 129v3"/>
</g>
<g id="outer-planets">
<path transform="translate(0 .5)" stroke="#ffffff" d="M127 146h1M128 147h1M129 148h2M131 149h1M132 150h1M140 157h1M142 159h1M144 160h1M146 162h1M148 164h1M150 165h1M152 167h1M154 168h1M156 170h1M369 178h2M367 179h2M365 180h2M355 185h1M353 186h1M351 187h1M349 188h1M347 189h1M345 190h1M343 191h1M341 192h1M339 193h1M337 194h1M332 294h1M331 295h1M334 295h1M333 296h1M336 296h1M372 296h1M371 297h1M335 298h1M338 298h1M370 298h1M337 299h1M340 299h1M369 299h1M339 300h1M342 300h1M368 300h1M327 301h1M341 301h1M344 301h1M367 301h1M346 302h1M366 302h1M329 303h1M343 303h1M348 303h1M365 303h1M331 304h1M345 304h1M364 304h1M347 305h1M363 305h1M333 306h1M362 306h1M335 307h1M361 307h1M360 308h1M337 309h1M359 309h1M339 310h1M358 310h1M341 312h1M357 312h4M343 313h1M361 313h4M309 320h1M311 322h1M313 324h1M314 326h1M316 328h1M318 330h1M320 332h1M290 334h1M321 334h1M291 336h1M323 336h1M292 338h1M293 340h1M294 342h1M296 344h1M297 346h1M242 347h1M298 348h1M242 349h1M299 350h1M242 351h1M300 352h1M242 353h1M242 355h1M243 357h1M243 359h1M243 361h1M305 361h1M243 363h1M243 365h1M308 366h1M243 367h1"/>
<path transform="translate(.5 0)" stroke="#ffffff" d="M243 378v7M306 362v2M307 364v2M326 354v2M327 351v3M328 349v2M329 346v3M330 344v2M352 319v5M353 324v6"/>
<path transform="translate(0 .5)" stroke="#0000ff" d="M115 132h5M114 133h1M120 133h2M113 134h1M122 134h1M114 135h1M123 135h1M115 136h1M115 144h1M114 145h1M123 145h1M113 146h1M122 146h1M114 147h1M120 147h2M115 148h5M135 153h3M159 173h3M326 293h3M352 309h3M366 312h1M368 312h1M371 312h2M374 312h2M378 312h1M380 312h1M369 317h2M376 317h2M371 318h2M374 318h2M369 322h4M374 322h4M241 342h3M242 373h3M243 387h3M243 391h3M240 394h2M247 394h2M242 395h2M245 395h2M240 399h9"/>
<path transform="translate(.5 0)" stroke="#0000ff" d="M116 137v2M116 142v2M117 139v3M124 136v2M124 143v2M125 138v5M136 152v1M136 154v1M160 172v1M160 174v1M238 387v5M239 392v2M242 341v1M242 343v1M242 388v3M243 372v1M243 374v1M244 395v4M244 400v4M246 388v3M249 392v2M250 387v5M327 294v1M353 308v1M353 310v1M367 310v5M368 315v2M373 310v17M378 315v2M379 310v5"/>
<path transform="translate(0 .5)" stroke="#ffff00" d="M326 291h3M376 294h4M381 294h4M384 298h3M322 299h3M383 299h1M387 299h1M381 300h2M387 303h1M353 307h3M387 307h1M388 308h1M347 317h3M359 327h5M358 328h1M364 328h1M358 334h1M364 334h1M359 335h2M362 335h2M357 339h9"/>
<path transform="translate(.5 0)" stroke="#ffff00" d="M323 298v1M323 300v1M327 290v1M327 292v1M348 316v1M348 318v1M354 306v1M354 308v1M357 329v5M361 335v4M361 340v4M365 329v5M380 292v15M386 304v3M388 300v3"/>
<path transform="translate(0 .5)" stroke="#00ff00" d="M374 165h1M386 165h1M375 166h1M385 166h1M376 171h9M375 174h1M385 174h1M374 175h1M386 175h1M379 177h1M381 177h1M379 181h3M359 183h3M331 196h3M313 309h3M336 330h3M344 342h1M352 342h1M345 343h1M351 343h1M346 344h5M345 345h1M351 345h1M345 351h1M351 351h1M346 352h2M349 352h2M344 356h9"/>
<path transform="translate(.5 0)" stroke="#00ff00" d="M314 308v1M314 310v1M332 195v1M332 197v1M337 329v1M337 331v1M344 346v5M348 352v4M348 357v2M352 346v5M360 182v1M360 184v1M376 167v4M376 172v2M378 178v3M380 169v2M380 172v6M382 178v3M384 167v4M384 172v2"/>
<path transform="translate(0 .5)" stroke="#808080" d="M277 118h1M276 120h1M275 122h1M275 124h1M274 126h1M274 128h1M273 130h1M272 132h1M272 134h1M271 136h1M318 312h1M320 314h1M322 316h1M324 318h1M326 319h1M328 321h1M330 323h1M332 325h1"/>
<path transform="translate(.5 0)" stroke="#808080" d="M281 106v2M282 103v3M283 101v2M340 338v6M341 333v5"/>
<path transform="translate(0 .5)" stroke="#ff0000" d="M292 83h1M291 84h1M280 85h3M283 86h1M283 90h1M281 94h1M280 97h15M278 111h3M269 141h3M305 317h3M287 329h3M326 340h3M330 356h5M302 357h3M328 357h2M335 357h2M327 358h1M337 358h1M326 359h1M338 359h1M332 364h1M316 368h6M320 369h1M326 369h1M338 369h1M319 370h1M327 370h1M337 370h1M318 371h1M328 371h2M335 371h2M317 372h1M330 372h5M316 373h1M308 374h5M315 374h1M307 375h1M313 375h2M306 376h1M306 382h1M314 382h1M307 383h1M313 383h1M308 384h5"/>
<path transform="translate(.5 0)" stroke="#ff0000" d="M270 140v1M270 142v1M279 110v1M279 112v1M280 95v2M282 91v3M284 87v3M288 328v1M288 330v1M290 85v12M290 98v2M303 356v1M303 358v1M305 377v5M306 316v1M306 318v1M314 376v1M315 377v5M321 369v5M324 362v5M325 360v2M325 367v2M327 339v1M327 341v1M339 360v2M339 367v2M340 362v5"/>
</g>
<g id="inner-planets">
<path transform="translate(0 .5)" stroke="#ffffff" d="M151 166h1M152 167h1M153 168h2M155 169h1M156 170h1M342 191h2M340 192h2M338 193h2M337 194h1M346 281h1M345 282h1M344 283h1M343 284h1M342 285h1M341 286h1M339 287h2M338 288h1M337 289h1M336 290h1M335 291h1M334 292h1M333 293h1M331 295h4M335 296h5"/>
<path transform="translate(.5 0)" stroke="#ffffff" d="M242 347v8M271 135v2M272 132v3M273 130v2M290 334v4M291 338v4M305 332v2M306 329v3M307 325v4M308 322v3M309 320v2M318 312v11M327 301v3M328 304v4M329 308v3M332 294v1"/>
<path transform="translate(0 .5)" stroke="#0000ff" d="M139 152h5M138 153h1M144 153h2M137 154h1M146 154h1M138 155h1M147 155h1M139 156h1M139 164h1M138 165h1M147 165h1M137 166h1M146 166h1M138 167h1M144 167h2M139 168h5M159 173h3M326 293h3M340 295h1M342 295h1M345 295h2M348 295h2M352 295h1M354 295h1M343 300h2M350 300h2M345 301h2M348 301h2M343 305h4M348 305h4M241 342h3M242 355h3M242 359h3M239 362h2M246 362h2M241 363h2M244 363h2M239 367h9"/>
<path transform="translate(.5 0)" stroke="#0000ff" d="M140 157v2M140 162v2M141 159v3M148 156v2M148 163v2M149 158v5M160 172v1M160 174v1M237 355v5M238 360v2M241 356v3M242 341v1M242 343v1M243 363v4M243 368v4M245 356v3M248 360v2M249 355v5M327 294v1M341 293v5M342 298v2M347 293v17M352 298v2M353 293v5"/>
<path transform="translate(0 .5)" stroke="#ffff00" d="M349 278h4M354 278h4M357 282h3M356 283h1M360 283h1M354 284h2M360 287h1M326 291h3M360 291h1M361 292h1M322 299h3M335 308h5M334 309h1M340 309h1M334 315h1M340 315h1M335 316h2M338 316h2M333 320h9"/>
<path transform="translate(.5 0)" stroke="#ffff00" d="M323 298v1M323 300v1M327 290v1M327 292v1M333 310v5M337 316v4M337 321v4M341 310v5M353 276v15M359 288v3M361 284v3"/>
<path transform="translate(0 .5)" stroke="#00ff00" d="M346 179h1M358 179h1M347 180h1M357 180h1M348 185h9M347 188h1M357 188h1M346 189h1M358 189h1M351 191h1M353 191h1M351 195h3M331 196h3M313 309h3M321 321h1M329 321h1M322 322h1M328 322h1M323 323h5M322 324h1M328 324h1M322 330h1M328 330h1M323 331h2M326 331h2M321 335h9"/>
<path transform="translate(.5 0)" stroke="#00ff00" d="M314 308v1M314 310v1M321 325v5M325 331v4M325 336v2M329 325v5M332 195v1M332 197v1M348 181v4M348 186v2M350 192v3M352 183v2M352 186v6M354 192v3M356 181v4M356 186v2"/>
<path transform="translate(0 .5)" stroke="#ff0000" d="M282 112h1M281 113h1M270 114h3M273 115h1M273 119h1M271 123h1M270 126h15M269 141h3M305 317h3M287 329h3M309 333h5M307 334h2M314 334h2M306 335h1M316 335h1M305 336h1M317 336h1M311 341h1M298 342h5M302 343h1M301 344h1M304 344h1M300 345h1M304 345h1M299 346h1M305 346h1M317 346h1M298 347h1M306 347h1M316 347h1M290 348h5M297 348h1M307 348h2M314 348h2M289 349h1M295 349h2M309 349h5M288 350h1M288 356h1M296 356h1M289 357h1M295 357h1M290 358h5"/>
<path transform="translate(.5 0)" stroke="#ff0000" d="M270 124v2M270 140v1M270 142v1M272 120v3M274 116v3M280 114v12M280 127v2M287 351v5M288 328v1M288 330v1M296 350v1M297 351v5M303 339v9M304 337v2M306 316v1M306 318v1M318 337v2M318 344v2M319 339v5"/>
</g>
<g id="aspects">
<path transform="translate(0 .5)" stroke="#ffff00" d="M164 177h1M323 289h1M322 290h1M319 296h1M303 313h1M286 325h1M242 337h1"/>
<path transform="translate(.5 0)" stroke="#00ffff" d="M319 291v5M320 280v11M321 269v11M322 258v11M323 247v11M324 237v10M325 226v11M326 215v11M327 204v11M328 198v6"/>
<path transform="translate(.5 0)" stroke="#00ff00" d="M268 146v3M269 149v5M270 154v4M271 158v5M272 163v5M273 168v5M274 173v5M275 178v4M276 182v5M277 187v5M278 192v5M279 197v4M280 201v5M281 206v5M282 211v5M283 216v4M284 220v5M285 225v5M286 230v5M287 235v5M288 240v4M289 244v5M290 249v5M291 254v5M292 259v4M293 263v5M294 268v5M295 273v5M296 278v4M297 282v5M298 287v5M299 292v5M300 297v5M301 302v4M302 306v5M303 311v2"/>
<path transform="translate(0 .5)" stroke="#0000ff" d="M167 180h1M168 181h1M171 183h1M172 184h1M175 187h1M176 188h1M179 190h1M180 191h1M183 194h1M184 195h1M187 197h1M188 198h1M191 201h1M192 202h1M195 204h1M196 205h1M199 208h1M200 209h1M203 211h1M204 212h1M207 215h1M208 216h1M211 218h1M212 219h1M215 222h1M216 223h1M219 225h1M220 226h1M223 229h1M224 230h1M227 232h1M228 233h1M231 236h1M232 237h1M235 239h1M236 240h1M239 243h1M240 244h1M243 246h1M244 247h1M247 250h1M248 251h1M251 253h1M252 254h1M255 257h1M256 258h1M259 260h1M260 261h1M263 264h1M264 265h1M267 267h1M268 268h1M271 271h1M272 272h1M275 274h1M276 275h1M279 278h1M280 279h1M283 281h1M284 282h1M287 285h1M288 286h1M291 288h1M292 289h1M295 292h1M296 293h1M300 296h1M303 299h1M304 300h1M307 302h1M308 303h1M311 306h1"/>
</g>
<g id="sidebar-sign-glyphs">
<path transform="translate(0 .5)" stroke="#ff0000" d="M624 186h1M626 186h1M628 186h1M630 194h2M624 226h1M632 226h1M625 227h1M631 227h1M624 230h9M625 233h1M631 233h1M624 234h1M632 234h1M627 267h3M625 268h2M630 268h2M624 269h1M625 270h2M630 271h2M632 272h1M625 273h2M630 273h2M627 274h3"/>
<path transform="translate(.5 0)" stroke="#ff0000" d="M624 271v2M625 187v7M626 228v2M626 231v2M627 187v7M627 271v2M629 187v7M629 269v2M630 228v2M630 231v2M632 192v2M632 269v2"/>
<path transform="translate(0 .5)" stroke="#ffff00" d="M630 196h3M631 197h1M630 198h1M625 199h1M629 199h1M626 200h1M628 200h1M627 201h1M626 202h1M628 202h1M625 203h1M629 203h1M624 204h1M625 236h2M630 236h2M625 239h1M631 239h1M627 276h3M626 277h1M630 277h1M624 282h1M625 283h1M631 283h1M632 284h1"/>
<path transform="translate(.5 0)" stroke="#ffff00" d="M624 237v2M625 278v3M626 281v2M627 237v3M628 240v5M629 237v3M630 281v2M631 278v3M632 197v2M632 237v2"/>
<path transform="translate(0 .5)" stroke="#00ff00" d="M630 206h2M624 207h1M628 207h2M630 209h2M631 214h1M625 246h1M631 246h1M626 247h1M630 247h1M627 248h3M626 249h1M630 249h1M626 253h1M630 253h1M627 254h3M624 286h1M626 286h1M628 286h1M630 288h1M630 293h1M629 294h1M631 294h1"/>
<path transform="translate(.5 0)" stroke="#00ff00" d="M625 206v5M625 250v3M625 287v7M626 211v3M627 208v3M627 287v7M628 206v1M629 208v1M629 287v6M631 210v1M631 250v3M631 287v6M632 207v2M632 211v3"/>
<path transform="translate(0 .5)" stroke="#0000ff" d="M632 216h1M625 217h2M628 217h2M627 218h2M630 218h2M624 219h1M632 221h1M625 222h2M628 222h2M627 223h2M630 223h2M624 224h1M625 256h1M632 256h1M626 257h1M628 257h2M631 257h1M626 263h1M628 263h2M631 263h1M625 264h1M632 264h1M627 298h3M624 301h4M629 301h4M624 303h9"/>
<path transform="translate(.5 0)" stroke="#0000ff" d="M625 218v1M625 223v1M626 216v1M626 221v1M626 299v2M627 219v1M627 224v1M627 257v7M629 216v1M629 221v1M630 219v1M630 224v1M630 257v7M630 299v2M631 217v1M631 222v1"/>
</g>
<g id="sidebar-planet-glyphs">
<path transform="translate(0 .5)" stroke="#ff0000" d="M627 316h3M625 317h2M630 317h2M628 320h1M625 323h2M630 323h2M627 324h3M630 356h3M631 357h1M630 358h1M626 359h2M629 359h1M625 360h1M628 360h1M625 363h1M628 363h1M626 364h2M631 366h1M625 367h2M625 373h8"/>
<path transform="translate(.5 0)" stroke="#ff0000" d="M624 319v3M624 361v2M625 318v1M625 322v1M625 372v1M626 370v2M627 368v2M629 361v2M630 367v6M630 374v1M631 318v1M631 322v1M632 319v3M632 357v2"/>
<path transform="translate(0 .5)" stroke="#0000ff" d="M626 326h3M625 327h1M629 327h2M626 328h1M626 332h1M625 333h1M629 333h2M626 334h3M624 397h1M627 397h1M629 397h1M632 397h1M626 399h1M630 399h1M627 400h1M629 400h1M626 402h2M629 402h2M628 406h1M627 407h1M629 407h1M628 408h1M626 409h1M630 409h1M627 410h1M629 410h1M626 412h5"/>
<path transform="translate(.5 0)" stroke="#0000ff" d="M625 396v3M625 406v3M627 329v3M628 396v9M628 410v2M628 413v2M630 328v1M630 332v1M631 329v3M631 396v3M631 406v3"/>
<path transform="translate(0 .5)" stroke="#00ff00" d="M626 336h1M630 336h1M627 337h3M627 341h1M629 341h1M626 343h5M625 386h1M631 386h1M626 389h5M625 391h1M631 391h1M627 392h1M629 392h1M628 394h1"/>
<path transform="translate(.5 0)" stroke="#00ff00" d="M626 338v3M626 387v2M626 390v1M627 393v1M628 341v2M628 344v1M628 388v1M628 390v3M629 393v1M630 338v3M630 387v2M630 390v1"/>
<path transform="translate(0 .5)" stroke="#ffff00" d="M627 346h3M627 350h1M629 350h1M626 352h5M625 377h2M628 377h2M629 379h2M628 380h1M631 384h1"/>
<path transform="translate(.5 0)" stroke="#ffff00" d="M626 347v3M627 376v8M628 350v2M628 353v2M630 347v3M630 382v2M631 380v2"/>
</g>
<g id="house-numbers">
<text transform="translate(68.26 287) scale(0.8 1)" fill="#ff0000">1</text>
<text transform="translate(114.26 369) scale(0.8 1)" fill="#ffff00">2</text>
<text transform="translate(204.26 418) scale(0.8 1)" fill="#00ff00">3</text>
<text transform="translate(306.26 409) scale(0.8 1)" fill="#0000ff">4</text>
<text transform="translate(381.26 352) scale(0.8 1)" fill="#ff0000">5</text>
<text transform="translate(414.26 280) scale(0.8 1)" fill="#ffff00">6</text>
<text transform="translate(412.26 201) scale(0.8 1)" fill="#00ff00">7</text>
<text transform="translate(366.26 119) scale(0.8 1)" fill="#0000ff">8</text>
<text transform="translate(276.26 70) scale(0.8 1)" fill="#ff0000">9</text>
<text transform="translate(174.26 79) scale(0.8 1)" fill="#ffff00">10</text>
<text transform="translate(99.26 136) scale(0.8 1)" fill="#00ff00">11</text>
<text transform="translate(66.26 208) scale(0.8 1)" fill="#0000ff">12</text>
</g>
</svg>
<pre id="sidebar"><span class="w">Astrolog 5.41G</span>
Inner ring:
Chart of the Moment
<span class="w">Tue March 3, 2026</span>
<span class="w">10:05:00pm (ST -8:00 GMT)</span>
San Francisco, CA
122°41'00"W 37°79'00"N
Outer ring - Transit:
<span class="y">Wed March 4, 2026</span>
<span class="y"> 8:05:35am (ST +2:00 GMT)</span>
 26°43'00"E 58°23'00"N
Placidus houses.
Tropical, Geocentric.
<span class="y">Julian Day = 2461103.7539</span>
Obliquity = 23°26'09"
Sidereal time: 18:40:32
DeltaT =  95.4246

<span class="r"> 1st house: </span><span class="b"> 2Sco46</span>
<span class="y"> 2nd house: </span><span class="r"> 1Sag18</span>
<span class="g"> 3rd house: </span><span class="y"> 3Cap36</span>
<span class="b"> 4th house: </span><span class="g"> 8Aqu10</span>
<span class="r"> 5th house: </span><span class="b">11Pis05</span>
<span class="y"> 6th house: </span><span class="r"> 9Ari23</span>
<span class="g"> 7th house: </span><span class="y"> 2Tau46</span>
<span class="b"> 8th house: </span><span class="g"> 1Gem18</span>
<span class="r"> 9th house: </span><span class="b"> 3Can36</span>
<span class="y">10th house: </span><span class="r"> 8Leo10</span>
<span class="g">11th house: </span><span class="y">11Vir05</span>
<span class="b">12th house: </span><span class="g"> 9Lib23</span>

<span class="r"> Sun: </span><span class="b">13Pis40</span>  - 0°00'
<span class="b">Moon: </span><span class="y">23Vir03</span>  - 1°17'
<span class="g">Merc: </span><span class="b">19Pis53</span><span class="w">R</span> + 3°39'
<span class="y">Venu: </span><span class="b">27Pis16</span>  - 1°18'
<span class="r">Mars: </span><span class="b"> 1Pis18</span>  - 1°06'
<span class="r">Jupi: </span><span class="b">15Can10</span><span class="w">R</span> + 0°21'
<span class="y">Satu: </span><span class="r"> 2Ari07</span>  - 2°08'
<span class="g">Uran: </span><span class="y">27Tau48</span>  - 0°11'
<span class="b">Nept: </span><span class="r"> 1Ari10</span>  - 1°18'
<span class="b">Plut: </span><span class="g"> 4Aqu37</span>  - 3°52'

Fire: 2, Earth: 2,
Air : 1, Water: 5
Car: 3, Fix: 2, Mut: 5
Yang: 3, Yin: 7
M: 3, N: 7, A: 2, D: 8</pre>
</body></html>
